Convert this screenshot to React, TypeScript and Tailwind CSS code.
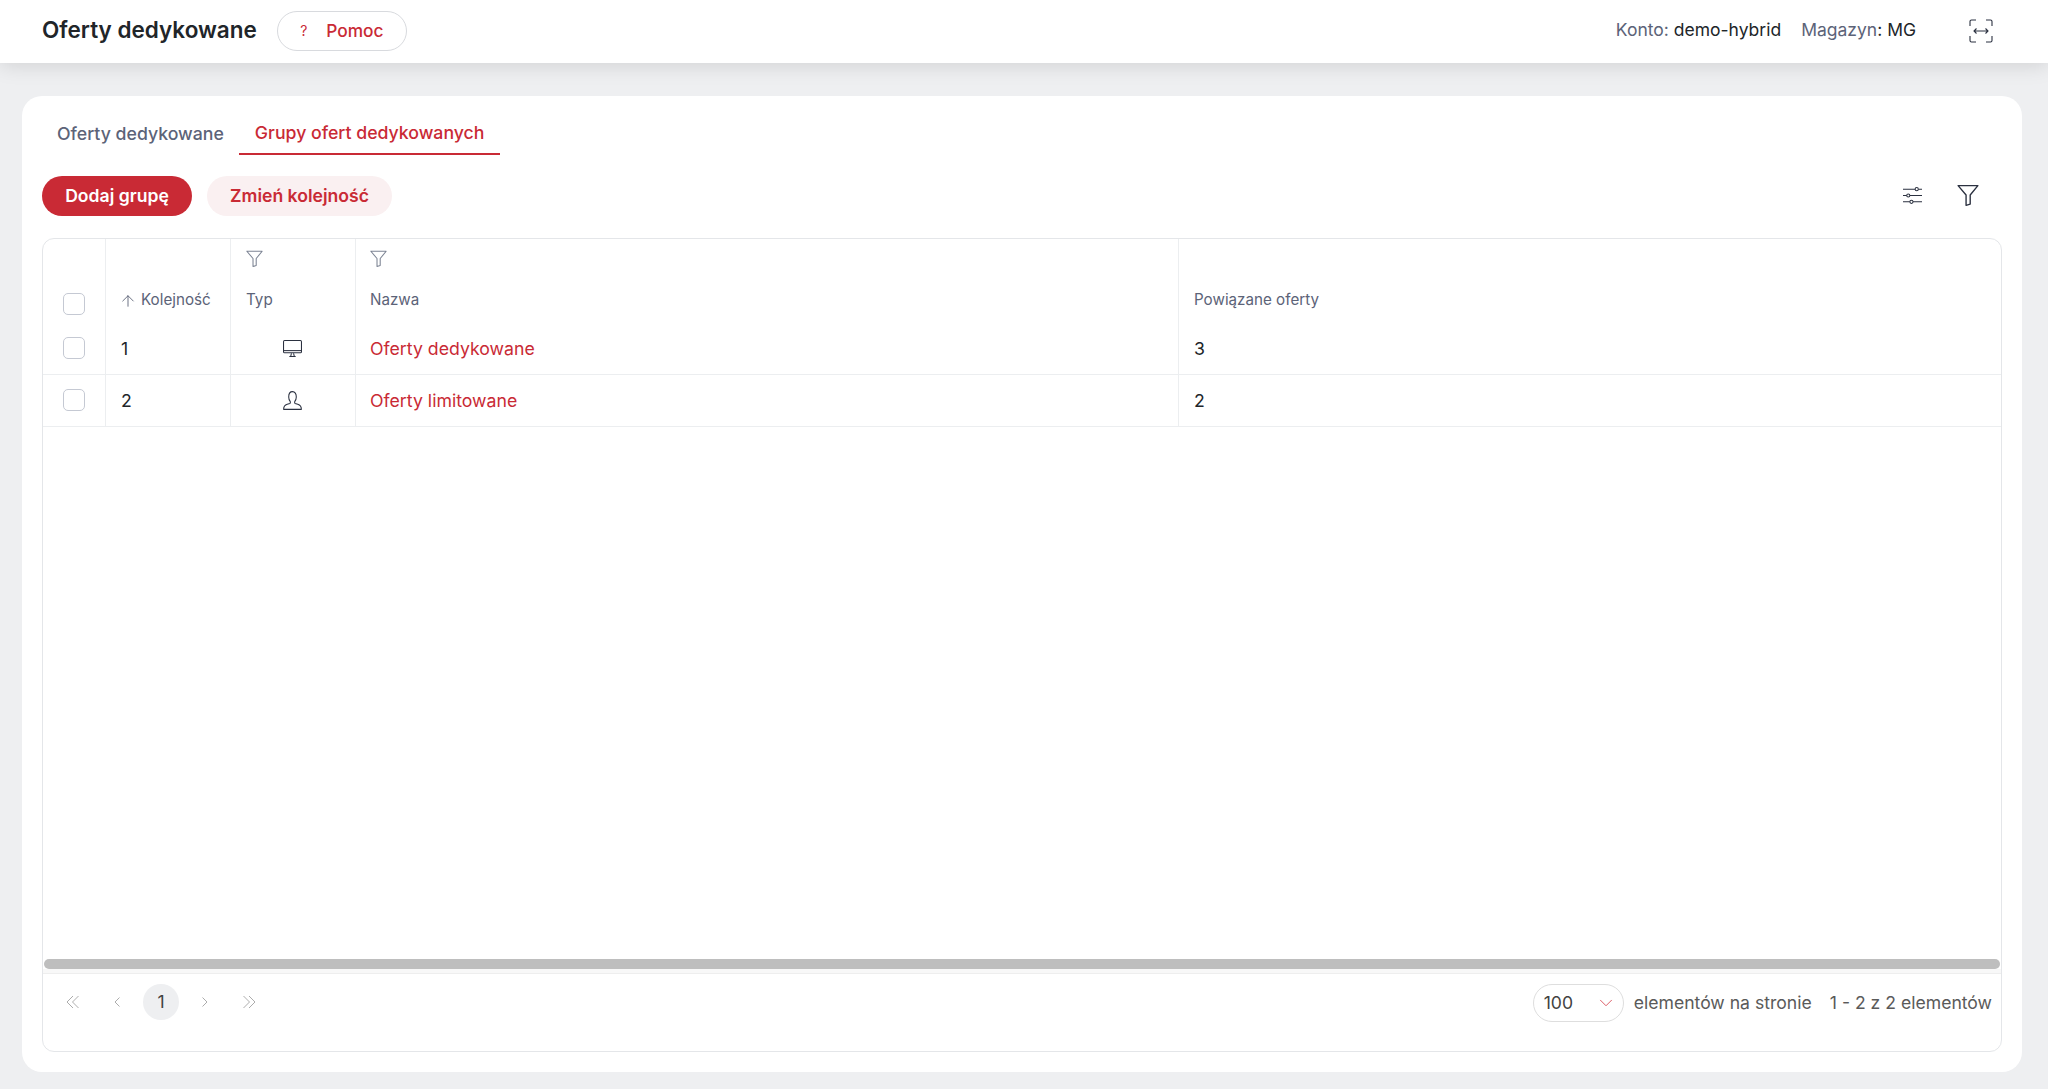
import { ArrowUp, ChevronDown } from "lucide-react";

function FunnelIcon({ className }: { className?: string }) {
  return (
    <svg viewBox="0 0 16 16" fill="none" stroke="currentColor" strokeWidth="1" className={className}>
      <path d="M0.800 1.200h14.400L9.600 8v6.600l-3 0.900V8z" strokeLinejoin="round" />
    </svg>
  );
}

function SlidersIcon({ className }: { className?: string }) {
  return (
    <svg viewBox="0 0 18 16" fill="none" stroke="currentColor" strokeWidth="1" className={className}>
      <path d="M0 2h11.500M14.500 2H18M0 8h3.500M6.500 8H18M0 14h6.500M9.500 14H18" />
      <circle cx="13" cy="2" r="1.500" />
      <circle cx="5" cy="8" r="1.500" />
      <circle cx="8" cy="14" r="1.500" />
    </svg>
  );
}

function MonitorIcon({ className }: { className?: string }) {
  return (
    <svg viewBox="0 0 18 16" fill="none" stroke="currentColor" strokeWidth="1" className={className}>
      <rect x="0.500" y="0.500" width="17" height="11.500" rx="1" />
      <path d="M0.500 10h17" />
      <path d="M6 15.500h6M7.300 15.500L8 12.500M10.700 15.500L10 12.500" />
    </svg>
  );
}

function UserIcon({ className }: { className?: string }) {
  return (
    <svg viewBox="0 0 18 18" fill="none" stroke="currentColor" strokeWidth="1" className={className}>
      <path d="M0.600 17.400h16.800c0-3-1.400-4.200-3.400-4.800l-2.500-0.800c-0.500-0.300-0.600-1.100-0.400-1.800 0.900-1.100 1.500-2.600 1.500-4.400 0-2.800-1.300-5-3.600-5S5.400 2.800 5.400 5.600c0 1.800 0.600 3.300 1.500 4.400 0.200 0.700 0.100 1.500-0.400 1.800l-2.500 0.800c-2 0.600-3.400 1.800-3.400 4.800z" strokeLinejoin="round" />
    </svg>
  );
}

function FullWidthIcon({ className }: { className?: string }) {
  return (
    <svg viewBox="0 0 24 24" fill="none" stroke="currentColor" strokeWidth="1.100" className={className}>
      <path d="M7 1H2.500A1.500 1.500 0 0 0 1 2.500V7M17 1h4.500A1.500 1.500 0 0 1 23 2.500V7M7 23H2.500A1.500 1.500 0 0 1 1 21.500V17M17 23h4.500a1.500 1.500 0 0 0 1.500-1.500V17" />
      <path d="M5 12h14M7.500 9.500L5 12l2.500 2.500M16.500 9.500L19 12l-2.500 2.500" />
    </svg>
  );
}

function PagerChevron({ dir, double }: { dir: "left" | "right"; double?: boolean }) {
  const flip = dir === "right" ? "-scale-x-100" : "";
  if (double) {
    return (
      <svg viewBox="0 0 14 14" fill="none" stroke="currentColor" strokeWidth="0.900" className={`h-[14px] w-[14px] ${flip}`}>
        <path d="M7 1L1 7l6 6M12.500 1L6.500 7l6 6" />
      </svg>
    );
  }
  return (
    <svg viewBox="0 0 6 10" fill="none" stroke="currentColor" strokeWidth="0.900" className={`h-[10px] w-[6px] ${flip}`}>
      <path d="M5.500 0.500L1 5l4.500 4.500" />
    </svg>
  );
}

function Checkbox() {
  return <div className="h-[22px] w-[22px] rounded-[5px] border border-[#c5c9d3] bg-white" />;
}

const rows = [
  { order: "1", icon: "monitor", name: "Oferty dedykowane", linked: "3" },
  { order: "2", icon: "user", name: "Oferty limitowane", linked: "2" },
];

const gridCols = "grid grid-cols-[63px_125px_125px_823px_1fr]";

export default function App() {
  return (
    <div className="flex h-[1089px] w-[2048px] flex-col overflow-hidden bg-[#eeeff1] font-['Inter',sans-serif] text-[#212529]">
      <header className="relative z-10 flex h-[63px] shrink-0 items-center justify-between bg-white pb-[2px] pl-[42px] pr-[55px] shadow-[0_2px_20px_rgba(0,0,0,0.13)]">
        <div className="flex items-center gap-5">
          <h1 className="text-[22.5px] font-semibold leading-none text-[#212529]">Oferty dedykowane</h1>
          <button className="flex h-[40px] w-[130px] items-center justify-center gap-[19px] rounded-full border border-[#d8dade] bg-white text-[17.3px] font-medium text-[#c92a35]">
            <span className="text-[14px] font-normal">?</span>
            <span>Pomoc</span>
          </button>
        </div>
        <div className="flex items-center text-[17.5px]">
          <span className="text-[#5c6378]">Konto: <span className="text-[#212529]">demo-hybrid</span></span>
          <span className="ml-5 text-[#5c6378]">Magazyn<span className="text-[#212529]">: MG</span></span>
          <FullWidthIcon className="ml-[53px] h-[24px] w-[24px] text-[#2b3140]" />
        </div>
      </header>

      <main className="mb-[17px] ml-[22px] mr-[26px] mt-[33px] flex min-h-0 flex-1 flex-col rounded-[20px] bg-white pb-[20px] pl-5 pr-5 pt-[15px]">
        <nav className="flex h-[44px] shrink-0 items-stretch pl-[15px] text-[17.7px] font-medium">
          <div className="flex items-center pr-[15px] pt-[3px] text-[#5c6378]">Oferty dedykowane</div>
          <div className="flex items-center border-b-2 border-[#c92a35] px-[16px] pt-[3px] text-[#c92a35]">Grupy ofert dedykowanych</div>
        </nav>

        <div className="mt-[21px] flex h-[40px] shrink-0 items-center gap-[15px] text-[17.6px] font-semibold">
          <button className="flex h-[40px] w-[150px] items-center justify-center rounded-full bg-[#c92a35] text-white">Dodaj grupę</button>
          <button className="flex h-[40px] w-[185px] items-center justify-center rounded-full bg-[#faf0f1] text-[#c92a35]">Zmień kolejność</button>
          <div className="ml-auto flex items-center gap-[35px] pb-[2px] pr-[23px] text-[#2b3140]">
            <SlidersIcon className="h-[17px] w-[19px]" />
            <FunnelIcon className="h-[22px] w-[22px]" />
          </div>
        </div>

        <section className="mt-[22px] flex min-h-0 flex-1 flex-col rounded-[12px] border border-[#e4e6e9]">
          <div className="flex-1">
            <div className={`${gridCols} h-[84px] text-[15.2px] text-[#5c6378]`}>
              <div className="flex items-end justify-center border-r border-[#eceef0] pb-[8px]">
                <Checkbox />
              </div>
              <div className="flex items-end border-r border-[#eceef0] pb-[11px] pl-[13px]">
                <ArrowUp className="mb-[2px] mr-[4px] h-[18px] w-[18px] text-[#4f566b]" strokeWidth={1.1} />
                Kolejność
              </div>
              <div className="flex flex-col justify-between border-r border-[#eceef0] pb-[11px] pl-[15px] pt-[11px]">
                <FunnelIcon className="h-[17px] w-[17px] text-[#7d8494]" />
                <span>Typ</span>
              </div>
              <div className="flex flex-col justify-between border-r border-[#eceef0] pb-[11px] pl-[14px] pt-[11px]">
                <FunnelIcon className="h-[17px] w-[17px] text-[#7d8494]" />
                <span>Nazwa</span>
              </div>
              <div className="flex items-end pb-[11px] pl-[15px]">Powiązane oferty</div>
            </div>
            {rows.map((row) => (
              <div key={row.order} className={`${gridCols} h-[52px] border-b border-[#eceef0] text-[17.7px]`}>
                <div className="flex items-center justify-center border-r border-[#eceef0] pb-[1px]">
                  <Checkbox />
                </div>
                <div className="flex items-center border-r border-[#eceef0] pl-[15px] pt-[1px]">{row.order}</div>
                <div className="flex items-center justify-center border-r border-[#eceef0] pr-[2px]">
                  {row.icon === "monitor" ? (
                    <MonitorIcon className="h-[17px] w-[19px] text-[#2b3140]" />
                  ) : (
                    <UserIcon className="h-[19px] w-[19px] text-[#2b3140]" />
                  )}
                </div>
                <div className="flex items-center border-r border-[#eceef0] pl-[14px] pt-[1px] text-[#c92a35]">{row.name}</div>
                <div className="flex items-center pl-[15px] pt-[1px]">{row.linked}</div>
              </div>
            ))}
          </div>

          <div className="flex h-[10px] shrink-0 items-start px-px">
            <div className="h-[10px] w-full rounded-full bg-[#bebebe]" />
          </div>
          <div className="h-[5px] shrink-0 border-b border-[#eeeeee] bg-[#f8f8f8]" />

          <footer className="flex h-[77px] shrink-0 items-start justify-between pl-[8px] pr-[9px] pt-[10px] text-[17.6px] text-[#5a5a5a]">
            <div className="flex items-center text-[#a3a3a3]">
              <span className="flex h-[36px] w-[44px] items-center justify-center"><PagerChevron dir="left" double /></span>
              <span className="flex h-[36px] w-[44px] items-center justify-center"><PagerChevron dir="left" /></span>
              <span className="flex h-[36px] w-[44px] items-center justify-center">
                <span className="flex h-[36px] w-[36px] items-center justify-center rounded-full bg-[#eeeff1] text-[#424242]">1</span>
              </span>
              <span className="flex h-[36px] w-[44px] items-center justify-center"><PagerChevron dir="right" /></span>
              <span className="flex h-[36px] w-[44px] items-center justify-center"><PagerChevron dir="right" double /></span>
            </div>
            <div className="flex items-center">
              <div className="flex h-[38px] w-[91px] items-center justify-between rounded-full border border-[#dedede] pl-[10px] pr-[6px] text-[#424242]">
                100
                <ChevronDown className="h-[22px] w-[22px] text-[#d9505a]" strokeWidth={1} />
              </div>
              <span className="ml-[10px]">elementów na stronie</span>
              <span className="ml-[18px]">1 - 2 z 2 elementów</span>
            </div>
          </footer>
        </section>
      </main>
    </div>
  );
}
